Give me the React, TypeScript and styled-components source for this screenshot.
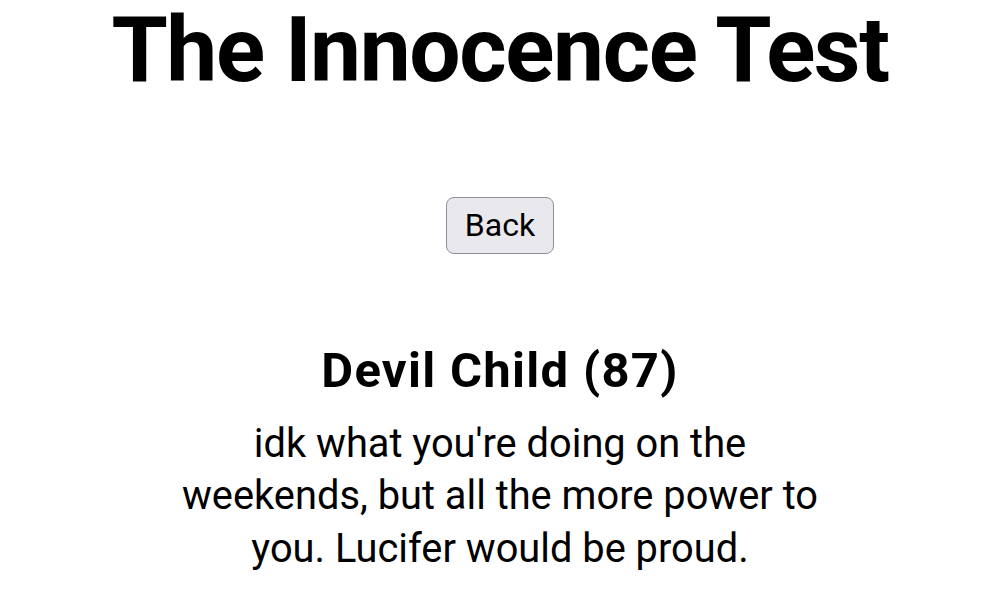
import React from "react";
import styled, { createGlobalStyle } from "styled-components";

const GlobalStyle = createGlobalStyle`
  html, body {
    margin: 0;
    padding: 0;
    background: #ffffff;
  }
  body {
    font-family: Roboto, "Liberation Sans", Arial, sans-serif;
    color: #000000;
  }
`;

const Page = styled.main`
  display: flex;
  flex-direction: column;
  align-items: center;
  text-align: center;
`;

const Title = styled.h1`
  margin: 0;
  font-size: 91px;
  font-weight: 700;
  line-height: 1.1;
  letter-spacing: -1.4px;
  white-space: nowrap;
`;

const BackButton = styled.button`
  margin-top: 97px;
  padding: 9px 18px;
  font-family: Roboto, "Liberation Sans", Arial, sans-serif;
  font-size: 32px;
  line-height: 37px;
  color: #000;
  background: #e9e9ed;
  border: 1.5px solid #8f8f9d;
  border-radius: 8px;
  cursor: pointer;
`;

const Result = styled.section`
  margin-top: 88px;
  width: 658px;
  display: flex;
  flex-direction: column;
  align-items: center;
`;

const ResultTitle = styled.h2`
  margin: 0;
  font-size: 49px;
  font-weight: 700;
  line-height: 1.2;
  letter-spacing: 1.3px;
`;

const Description = styled.p`
  margin: 17px 0 0;
  font-size: 39.8px;
  line-height: 52.5px;
`;

const App: React.FC = () => {
  return (
    <>
      <GlobalStyle />
      <Page>
        <Title>The Innocence Test</Title>
        <BackButton type="button">Back</BackButton>
        <Result>
          <ResultTitle>Devil Child (87)</ResultTitle>
          <Description>
            idk what you're doing on the weekends, but all the more power to
            you. Lucifer would be proud.
          </Description>
        </Result>
      </Page>
    </>
  );
};

export default App;
